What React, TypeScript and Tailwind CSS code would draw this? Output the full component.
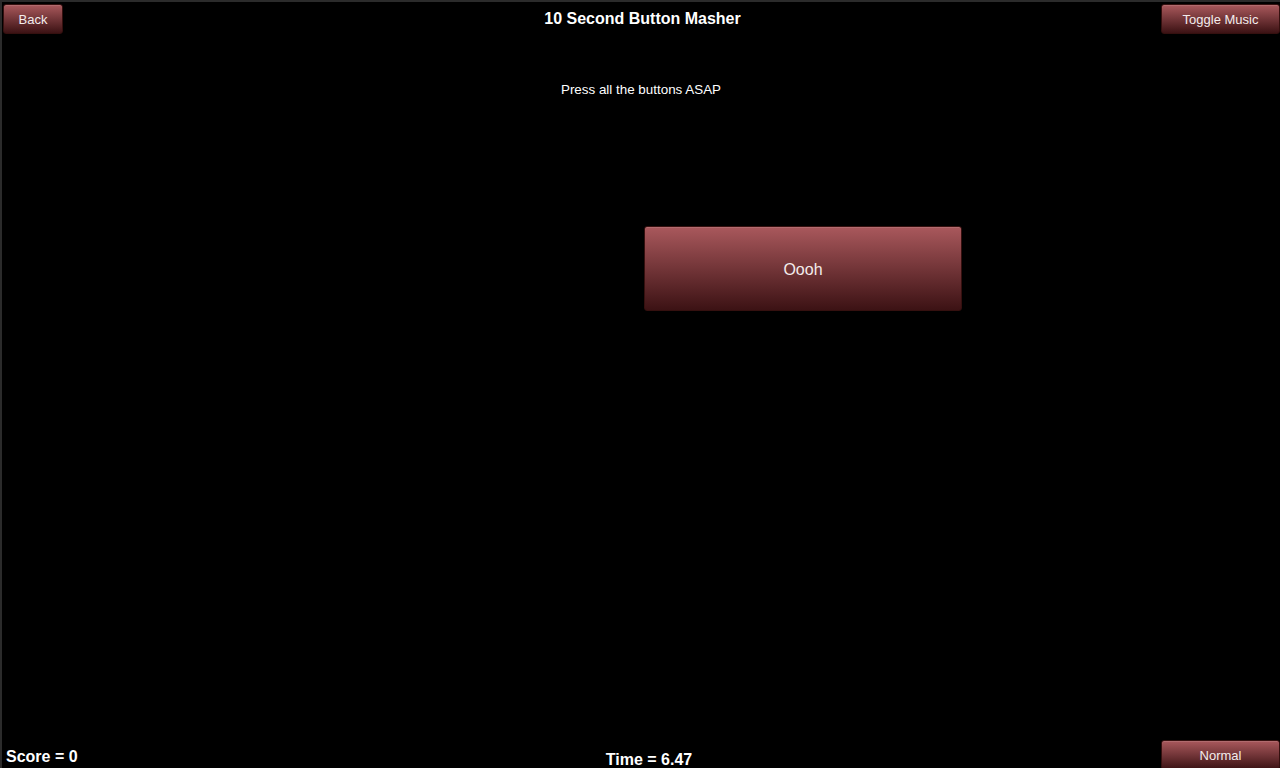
import { useState } from "react";

// red glossy button used across the game screen
const btn =
    "rounded-[3px] border border-[#35100f] bg-[linear-gradient(to_bottom,#a9585c,#3c1214)] text-[#f3ecec] shadow-[inset_0_1px_0_rgba(255,255,255,0.12)]";

export default function App() {
    const [score, setScore] = useState(0);

    return (
        <div
            className="flex h-[768px] w-[1280px] flex-col overflow-hidden border-t-2 border-l-2 border-[#2b2b2b] bg-black text-white"
            style={{ fontFamily: '"Liberation Sans", Arial, sans-serif' }}
        >
            {/* top bar */}
            <div className="grid grid-cols-[1fr_auto_1fr] items-start">
                <div>
                    <button className={`${btn} ml-[1px] mt-[2px] h-[30px] w-[60px] pt-[2px] text-[13px]`}>
                        Back
                    </button>
                </div>
                <h1 className="mt-[7px] ml-[3px] text-[16px] font-bold leading-[19px]">10 Second Button Masher</h1>
                <div className="flex justify-end">
                    <button className={`${btn} mt-[2px] h-[30px] w-[119px] pt-[2px] text-[13px]`}>
                        Toggle Music
                    </button>
                </div>
            </div>

            {/* play area */}
            <div className="relative flex-1">
                <p className="mt-[47px] text-center text-[13.4px] leading-[17px]">Press all the buttons ASAP</p>
                <button
                    onClick={() => setScore(s => s + 1)}
                    className={`${btn} absolute left-[642px] top-[192px] h-[85px] w-[318px] pt-[2px] text-[16px]`}
                >
                    Oooh
                </button>
            </div>

            {/* bottom bar */}
            <div className="grid h-[30px] grid-cols-[1fr_auto_1fr] items-end">
                <div className="mb-[2px] ml-[4px] text-[16px] font-bold leading-[18px]">Score = {score}</div>
                <div className="mb-[-1px] ml-[16px] text-[16px] font-bold leading-[18px]">Time = 6.47</div>
                <div className="flex justify-end">
                    <button className={`${btn} h-[30px] w-[119px] translate-y-[2px] pt-[2px] text-[13px]`}>
                        Normal
                    </button>
                </div>
            </div>
        </div>
    );
}
